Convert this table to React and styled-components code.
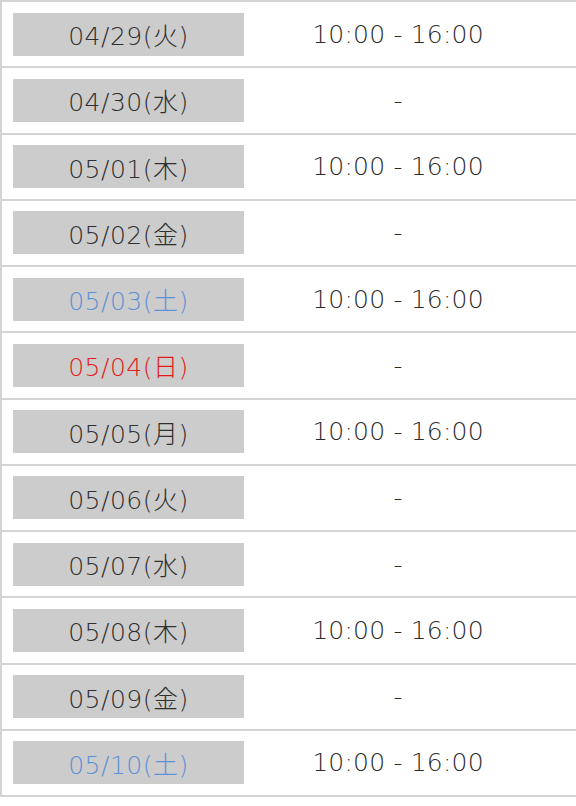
import React from "react";
import styled, { createGlobalStyle } from "styled-components";

const schedule = [
  { date: "04/29", day: "火", hours: "10:00 - 16:00" },
  { date: "04/30", day: "水", hours: "-" },
  { date: "05/01", day: "木", hours: "10:00 - 16:00" },
  { date: "05/02", day: "金", hours: "-" },
  { date: "05/03", day: "土", hours: "10:00 - 16:00", tone: "sat" },
  { date: "05/04", day: "日", hours: "-", tone: "sun" },
  { date: "05/05", day: "月", hours: "10:00 - 16:00" },
  { date: "05/06", day: "火", hours: "-" },
  { date: "05/07", day: "水", hours: "-" },
  { date: "05/08", day: "木", hours: "10:00 - 16:00" },
  { date: "05/09", day: "金", hours: "-" },
  { date: "05/10", day: "土", hours: "10:00 - 16:00", tone: "sat" },
];

const toneColors = {
  sat: "#5f91d6",
  sun: "#e31b1b",
};

function App() {
  return (
    <>
      <GlobalStyle />
      <Table>
        {schedule.map((item) => (
          <Row key={item.date}>
            <DateCell>
              <DateLabel $tone={item.tone}>
                {item.date}({item.day})
              </DateLabel>
            </DateCell>
            <HoursCell>{item.hours}</HoursCell>
          </Row>
        ))}
      </Table>
    </>
  );
}

export default App;

const GlobalStyle = createGlobalStyle`
  body {
    margin: 0;
    background: #ffffff;
    font-family: "DejaVu Sans", "Noto Sans CJK JP", sans-serif;
    color: #333333;
  }
`;

const Table = styled.div`
  display: flex;
  flex-direction: column;
  width: 576px;
  border-top: 2px solid #d4d4d4;
  border-left: 2px solid #d4d4d4;
  box-sizing: border-box;
  overflow: hidden;
`;

const Row = styled.div`
  display: grid;
  grid-template-columns: 254px 284px;
  align-items: center;
  height: 66.25px;
  border-bottom: 2px solid #d4d4d4;
  box-sizing: border-box;
`;

const DateCell = styled.div`
  padding-left: 11px;
`;

const DateLabel = styled.div`
  display: flex;
  align-items: center;
  justify-content: center;
  width: 231px;
  height: 43px;
  background-color: #cccccc;
  font-size: 25px;
  font-weight: 200;
  letter-spacing: 0.5px;
  color: ${(props) => toneColors[props.$tone] || "#2f2f2f"};
`;

const HoursCell = styled.div`
  text-align: center;
  font-size: 25px;
  font-weight: 200;
  letter-spacing: 0.2px;
  color: #2a2a2a;
`;
